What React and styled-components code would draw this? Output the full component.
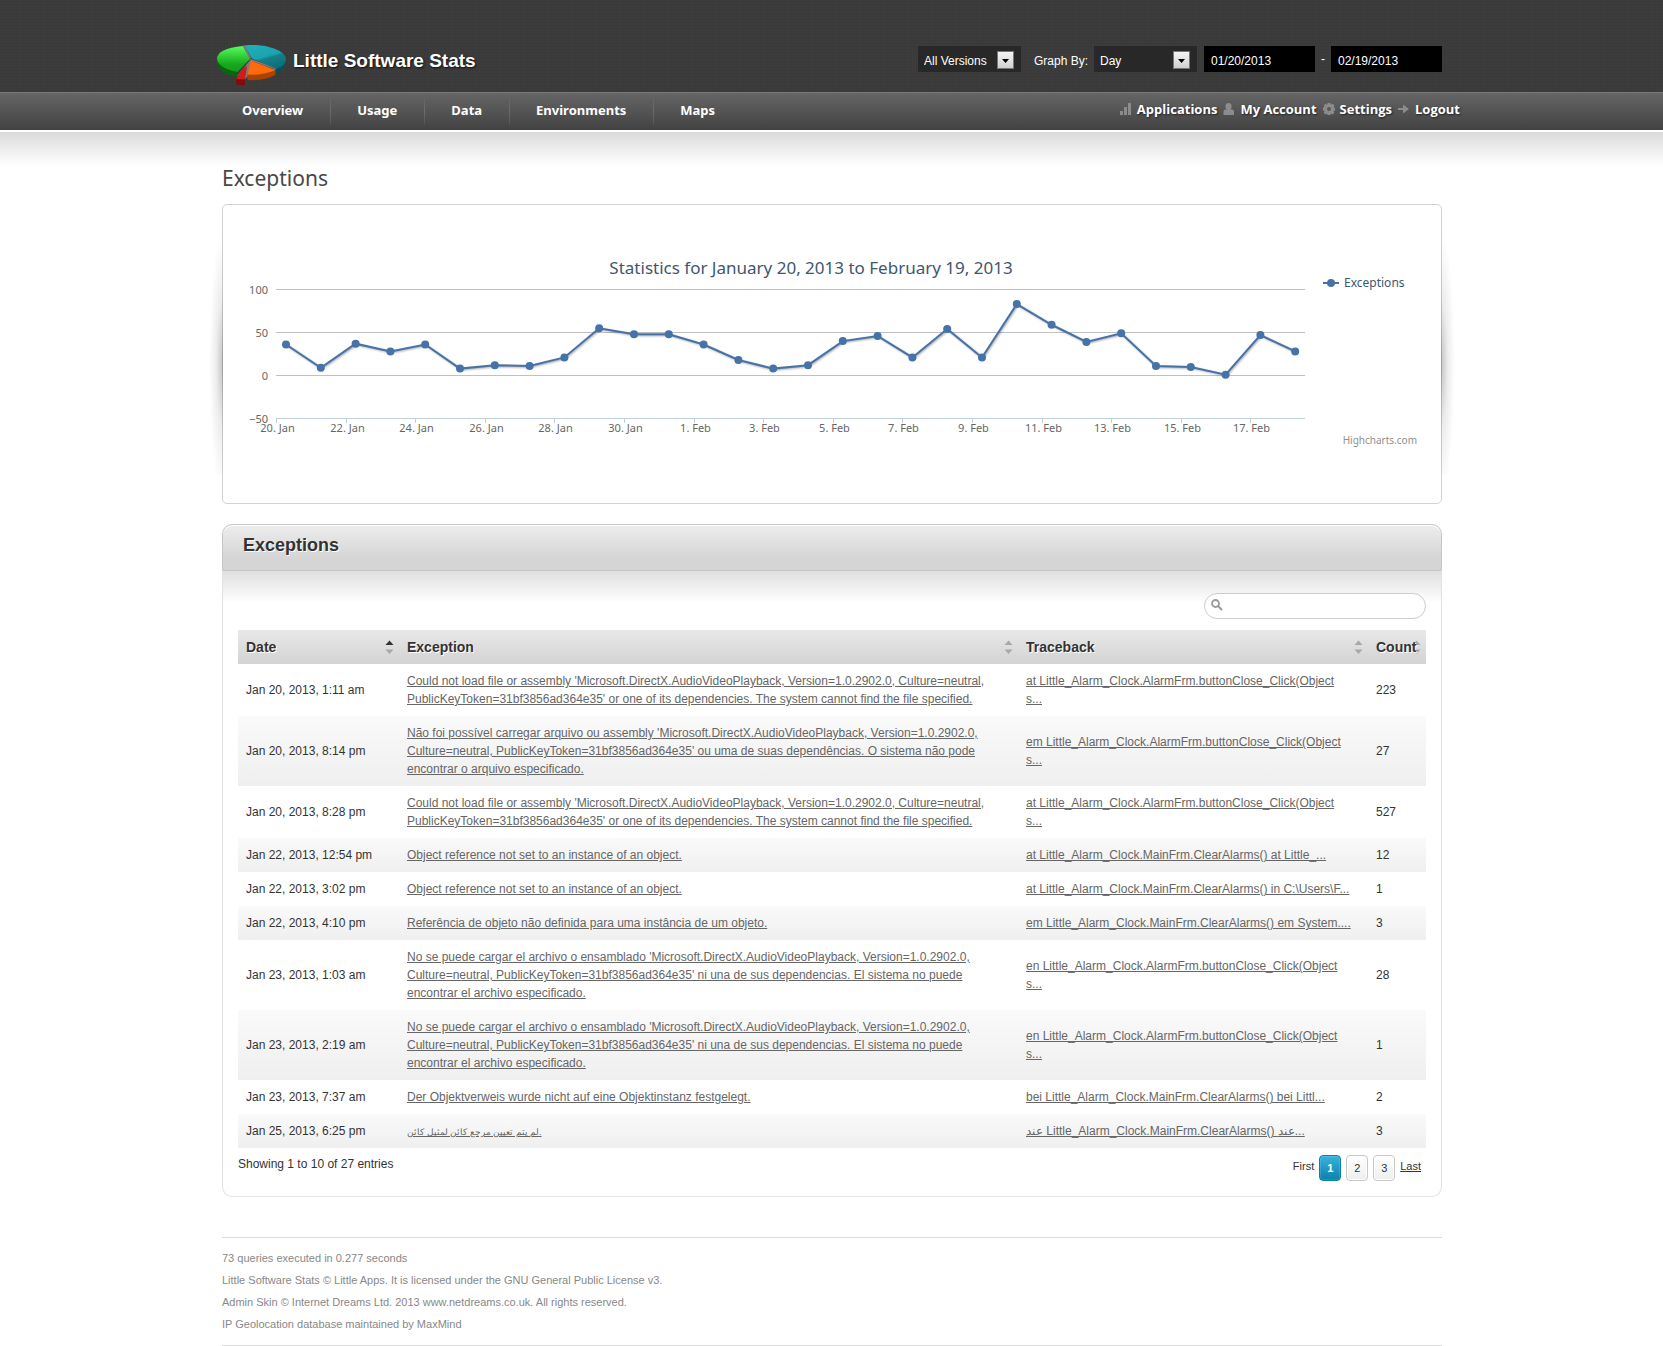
import React, { useState } from "react";
import styled, { createGlobalStyle } from "styled-components";

const SANS = '"Liberation Sans", Arial, sans-serif';
const HUMANIST = '"Noto Sans", Tahoma, sans-serif';
const OPEN = '"Open Sans", "Segoe UI", sans-serif';

const GlobalStyle = createGlobalStyle`
  *, *::before, *::after { box-sizing: border-box; }
  body { margin: 0; background: #fff; color: #333; font: 12px/18px ${SANS}; }
  button, input, select { font: inherit; color: inherit; }
`;

const Wrap = styled.div`
  max-width: 1221px;
  margin: 0 auto;
  padding-left: 1px;
`;

const TopBar = styled.header`
  background-color: #3b3b3b;
  background-image:
    repeating-linear-gradient(90deg, rgba(255, 255, 255, 0.01) 0 1px, transparent 1px 3px),
    repeating-linear-gradient(0deg, rgba(0, 0, 0, 0.03) 0 1px, transparent 1px 3px);
`;

const TopInner = styled(Wrap)`
  display: flex;
  align-items: flex-start;
  justify-content: space-between;
  height: 92px;
  padding-top: 45px;
`;

const Brand = styled.a`
  display: flex;
  align-items: flex-start;
  gap: 7px;
  margin-left: -5px;
  color: #fff;
  font-size: 19px;
  font-weight: 700;
  line-height: 32px;
  text-decoration: none;
  text-shadow: 1px 1px 2px #111;
`;

const Filters = styled.form`
  display: flex;
  color: #fff;
  line-height: 30px;
  padding-top: 1px;
`;

const FilterLabel = styled.label`
  padding: 0 6px 0 13px;
`;

const SelectBox = styled.span`
  position: relative;
  width: 103px;
  height: 26px;
`;

const Select = styled.select`
  appearance: none;
  display: block;
  width: 100%;
  height: 26px;
  padding: 4px 30px 0 6px;
  border: 0;
  border-radius: 0;
  background: #282828;
  line-height: 22px;
`;

const SelectArrow = styled.svg`
  position: absolute;
  top: 5px;
  right: 7px;
  pointer-events: none;
`;

const DateInput = styled.input`
  width: 111px;
  height: 26px;
  margin-left: ${(p) => (p.$first ? 7 : 0)}px;
  padding: 4px 7px 0;
  border: 0;
  background: #000;
  line-height: 22px;
`;

const Dash = styled.span`
  width: 16px;
  line-height: 26px;
  text-align: center;
`;

const NavBar = styled.nav`
  height: 38px;
  border-top: 1px solid #7a7a7a;
  background: linear-gradient(#656565, #424242);
`;

const NavInner = styled.div`
  display: flex;
  justify-content: space-between;
  max-width: 1257px;
  margin: 0 auto;
  padding-left: 13px;
`;

const Menu = styled.ul`
  display: flex;
  margin: 0;
  padding: 3px 0 0;
  list-style: none;
`;

const MenuItem = styled.li`
  padding: 0 27px 0 26px;
  line-height: 28px;
  & + & {
    border-left: 1px solid;
    border-image: linear-gradient(#606060, #707070, #505050) 1;
  }
`;

const MenuLink = styled.a`
  color: #fff;
  font: 700 13px/28px ${HUMANIST};
  text-decoration: none;
`;

const UserLinks = styled.div`
  display: flex;
  gap: 6px;
  padding-top: 5px;
`;

const UserLink = styled.a`
  display: flex;
  align-items: center;
  gap: 5px;
  height: 22px;
  color: #fff;
  font: 700 13px/22px ${OPEN};
  text-decoration: none;
  text-shadow: 1px 1px 2px #222;
`;

const Main = styled.main`
  border-top: 2px solid #fff;
  background: linear-gradient(#dadada, #fff) 0 0 / 100% 34px no-repeat;
`;

const PageTitle = styled.h1`
  margin: 0;
  padding: 32px 0 12px;
  color: #484848;
  font: 400 21px/28px ${HUMANIST};
`;

const ChartCard = styled.section`
  position: relative;
  padding-bottom: 54px;
  border: 1px solid #d2d2d2;
  border-radius: 5px;
  background: #fff;
  &::before, &::after {
    content: "";
    position: absolute;
    top: 6px;
    bottom: 28px;
    width: 14px;
  }
  &::before {
    right: 100%;
    background: radial-gradient(ellipse 100% 50% at 100% 58%, rgba(0, 0, 0, 0.24), rgba(0, 0, 0, 0.07) 50%, transparent);
  }
  &::after {
    left: 100%;
    background: radial-gradient(ellipse 100% 50% at 0 58%, rgba(0, 0, 0, 0.24), rgba(0, 0, 0, 0.07) 50%, transparent);
  }
`;

const ChartSvg = styled.svg`
  display: block;
  width: 100%;
  height: auto;
  font-family: "Noto Sans", "Lucida Grande", sans-serif;
`;

const Panel = styled.section`
  margin-top: 20px;
`;

const PanelHead = styled.h2`
  margin: 0;
  padding: 0 20px 4px;
  border: 1px solid #c6c6c6;
  border-radius: 10px 10px 0 0;
  background: linear-gradient(#ededed, #d5d5d5 75%);
  box-shadow: inset 0 1px #fff;
  color: #333;
  font-size: 18px;
  line-height: 41px;
  text-shadow: 1px 1px #fff;
`;

const PanelBody = styled.div`
  padding: 22px 15px 15px;
  border: 1px solid #e2e2e2;
  border-top: 0;
  border-radius: 0 0 10px 10px;
  background: linear-gradient(#dfdfdf, #fff) 0 0 / 100% 32px no-repeat;
`;

const SearchBox = styled.div`
  display: flex;
  align-items: center;
  gap: 6px;
  width: 222px;
  height: 26px;
  margin: 0 0 11px auto;
  padding: 0 12px 2px 6px;
  border: 1px solid #ccc;
  border-radius: 13px;
  background: #fff;
`;

const SearchInput = styled.input`
  flex: 1;
  min-width: 0;
  padding: 0;
  border: 0;
  outline: 0;
  background: none;
`;

const Table = styled.table`
  width: 100%;
  table-layout: fixed;
  border-collapse: collapse;
`;

const Col = styled.col`
  width: ${(p) => p.$w};
`;

const Th = styled.th`
  position: relative;
  height: 34px;
  padding: 0 8px;
  text-align: left;
`;

const HeadRow = styled.tr`
  background: linear-gradient(#e8e8e8, #d3d3d3);
`;

const SortButton = styled.button`
  position: relative;
  z-index: 1;
  padding: 0;
  border: 0;
  background: none;
  color: #333;
  font-size: 14px;
  font-weight: 700;
  line-height: 34px;
  text-shadow: 1px 1px #fff;
`;

const SortMark = styled.svg`
  position: absolute;
  top: 10px;
  right: 5px;
`;

const Row = styled.tr`
  &:nth-child(even) { background: linear-gradient(#fafafa, #efefef); }
`;

const Td = styled.td`
  padding: 8px;
  padding-right: ${(p) => (p.$wide ? 16 : 8)}px;
  vertical-align: middle;
  overflow-wrap: break-word;
`;

const CellLink = styled.a`
  color: #666;
  font-size: ${(p) => (p.lang === "ar" ? 9 : 12)}px;
  line-height: ${(p) => (p.lang === "ar" ? 14 : 18)}px;
  text-decoration: underline;
`;

const TableFoot = styled.div`
  display: flex;
  justify-content: space-between;
  padding-top: 7px;
`;

const Pager = styled.nav`
  display: flex;
  gap: 5px;
  padding-right: 5px;
  font-size: 11px;
`;

const PageWord = styled.a`
  color: #333;
  line-height: 22px;
  text-decoration: ${(p) => (p.$link ? "underline" : "none")};
`;

const PageButton = styled.button`
  width: 22px;
  height: 26px;
  padding: 0;
  border: 1px solid ${(p) => (p.$active ? "#0e7fa6" : "#c8c8c8")};
  border-radius: 4px;
  background: ${(p) => (p.$active ? "linear-gradient(#36b4de, #0b81aa)" : "linear-gradient(#fff, #eee)")};
  box-shadow: inset 0 0 0 1px ${(p) => (p.$active ? "rgba(255,255,255,.12)" : "#fff")};
  color: ${(p) => (p.$active ? "#fff" : "#333")};
  font-weight: ${(p) => (p.$active ? 700 : 400)};
`;

const Footer = styled.footer`
  margin-top: 40px;
  padding: 9px 0 10px;
  border: 1px solid #dcdcdc;
  border-width: 1px 0;
  color: #888;
  font-size: 11px;
  line-height: 22px;
`;

const FootLine = styled.p`
  margin: 0;
`;

function Logo() {
  return (
    <svg width="69" height="41" viewBox="0 0 69 41" aria-hidden="true">
      <defs>
        <linearGradient id="lgGreen" x1="0" y1="0" x2="0" y2="1">
          <stop offset="0" stopColor="#55ff5c" />
          <stop offset="0.700" stopColor="#17a81f" />
          <stop offset="1" stopColor="#149a1c" />
        </linearGradient>
        <linearGradient id="lgTeal" x1="0.200" y1="0" x2="0.700" y2="1">
          <stop offset="0" stopColor="#1fb0ba" />
          <stop offset="0.500" stopColor="#1ba3ae" />
          <stop offset="0.600" stopColor="#128089" />
          <stop offset="1" stopColor="#0e6d75" />
        </linearGradient>
      </defs>
      <path d="M34 14 L20 31 L28 34 L31 31 L35 16 L60 25 L60 23Z" fill="#85777b" />
      <path d="M59 23 L59 29 Q68 25 69 18 L69 13Z" fill="#0a4f55" />
      <path d="M35 13.500 L27 0.500 Q43 -1.500 57 3.500 Q69 8 69 14 Q69 20 59.500 24Z" fill="url(#lgTeal)" />
      <path d="M0 13 L0 19 Q2 28 20 32.500 L21 26.500Z" fill="#0a6410" />
      <path d="M33 14 L26 1 Q0 3.500 0 14 Q1 23 20.500 27Z" fill="url(#lgGreen)" />
      <path d="M30.500 29 L30.500 35 Q46 36 58.500 30 L58.500 24.500Z" fill="#a84300" />
      <path d="M34 15.500 L30.500 29.500 Q46 30.500 58.500 25Z" fill="#ff6a0a" />
      <path d="M19 33.500 L19 39.500 L28 40.500 L28 34Z" fill="#800c0c" />
      <path d="M30 21 L25 24 L19 33.800 L28 34.500Z" fill="#cc1c1c" />
      <path d="M33.500 13.500 L26.500 0.500" stroke="#8c7c80" strokeWidth="1.500" fill="none" />
    </svg>
  );
}

const userIcons = {
  bars: (
    <path d="M0 8h3v4H0z M4 4h3v8H4z M8 0h3v12H8z" />
  ),
  person: (
    <path d="M5.500 0a3 3 0 0 1 3 3v1.500a3 3 0 0 1-1 2h1.500a2 2 0 0 1 2 2V12H0.500V8.500a2 2 0 0 1 2-2H4a3 3 0 0 1-1.500-2V3a3 3 0 0 1 3-3z" />
  ),
  gear: (
    <path fillRule="evenodd" d="M4.500 0h3l.5 1.800 1.800-1 1.600 1.700-1 1.700 1.600.6v2.700l-1.700.6 1 1.700-1.700 1.600-1.600-.9-.5 1.500h-3l-.5-1.600-1.700 1L.700 9.700l1-1.600L0 7.500v-3l1.700-.5-1-1.600L2.500.700l1.600 1zM6 4a2 2 0 1 0 0 4 2 2 0 0 0 0-4z" />
  ),
  arrow: (
    <path d="M0 5h5V1.500L11 6l-6 4.500V7H0z" />
  ),
};

const pageLinks = ["Overview", "Usage", "Data", "Environments", "Maps"];
const userLinks = [
  ["bars", "Applications"],
  ["person", "My Account"],
  ["gear", "Settings"],
  ["arrow", "Logout"],
];

const counts = [36, 9, 37, 28, 36, 8, 12, 11, 21, 55, 48, 48, 36, 18, 8, 12, 40, 46, 21, 54, 21, 83, 59, 39, 49, 11, 10, 1, 47, 28];
const dayLabels = ["20. Jan", "22. Jan", "24. Jan", "26. Jan", "28. Jan", "30. Jan", "1. Feb", "3. Feb", "5. Feb", "7. Feb", "9. Feb", "11. Feb", "13. Feb", "15. Feb", "17. Feb"];

const PLOT = { left: 53, right: 1082, zero: 170.5, day: 34.8 };
const yOf = (v) => PLOT.zero - v * 0.86;

function Chart() {
  const points = counts.map((v, i) => [PLOT.left + 10 + i * PLOT.day, yOf(v)]);
  const line = points.map((p) => p.join(",")).join(" ");
  return (
    <ChartSvg viewBox="0 0 1218 244" role="img" aria-label="Exceptions per day">
      <text x="588" y="69" textAnchor="middle" fontSize="17" fill="#3e576f">
        Statistics for January 20, 2013 to February 19, 2013
      </text>
      {[100, 50, 0, -50].map((v) => (
        <g key={v}>
          <line x1={PLOT.left} x2={PLOT.right} y1={yOf(v)} y2={yOf(v)} stroke={v < 0 ? "#c0d0e0" : "#c0c0c0"} />
          <text x="45" y={yOf(v) + 4.5} textAnchor="end" fontSize="11" fill="#666">{String(v).replace("-", "−")}</text>
        </g>
      ))}
      {dayLabels.map((d, i) => {
        const x = Math.round(PLOT.left + i * 2 * PLOT.day) + 0.5;
        return (
          <g key={d}>
            <line x1={x} x2={x} y1="214" y2="218" stroke="#c0d0e0" />
            <text x={x + 1} y="227" textAnchor="middle" fontSize="11" fill="#666">{d}</text>
          </g>
        );
      })}
      <g fill="none" stroke="#000" transform="translate(1 1)">
        <polyline points={line} strokeWidth="5" strokeOpacity="0.05" />
        <polyline points={line} strokeWidth="3" strokeOpacity="0.1" />
        <polyline points={line} strokeWidth="1" strokeOpacity="0.15" />
      </g>
      <polyline points={line} fill="none" stroke="#4572a7" strokeWidth="2" />
      {points.map(([x, y]) => <circle key={x} cx={x} cy={y} r="4" fill="#4572a7" />)}
      <line x1="1100" x2="1116" y1="78" y2="78" stroke="#4572a7" strokeWidth="2" />
      <circle cx="1108" cy="78" r="4" fill="#4572a7" />
      <text x="1121" y="82" fontSize="12" fill="#3e576f">Exceptions</text>
      <text x="1194" y="239" textAnchor="end" fontSize="10" fill="#909090">Highcharts.com</text>
    </ChartSvg>
  );
}

const LOAD_EN = "Could not load file or assembly 'Microsoft.DirectX.AudioVideoPlayback, Version=1.0.2902.0, Culture=neutral, PublicKeyToken=31bf3856ad364e35' or one of its dependencies. The system cannot find the file specified.";
const LOAD_PT = "Não foi possível carregar arquivo ou assembly 'Microsoft.DirectX.AudioVideoPlayback, Version=1.0.2902.0, Culture=neutral, PublicKeyToken=31bf3856ad364e35' ou uma de suas dependências. O sistema não pode encontrar o arquivo especificado.";
const LOAD_ES = "No se puede cargar el archivo o ensamblado 'Microsoft.DirectX.AudioVideoPlayback, Version=1.0.2902.0, Culture=neutral, PublicKeyToken=31bf3856ad364e35' ni una de sus dependencias. El sistema no puede encontrar el archivo especificado.";
const NULL_EN = "Object reference not set to an instance of an object.";
const NULL_AR = "لم يتم تعيين مرجع كائن لمثيل كائن.";

const rows = [
  ["Jan 20, 2013, 1:11 am", LOAD_EN, "at Little_Alarm_Clock.AlarmFrm.buttonClose_Click(Object s...", 223],
  ["Jan 20, 2013, 8:14 pm", LOAD_PT, "em Little_Alarm_Clock.AlarmFrm.buttonClose_Click(Object s...", 27],
  ["Jan 20, 2013, 8:28 pm", LOAD_EN, "at Little_Alarm_Clock.AlarmFrm.buttonClose_Click(Object s...", 527],
  ["Jan 22, 2013, 12:54 pm", NULL_EN, "at Little_Alarm_Clock.MainFrm.ClearAlarms() at Little_...", 12],
  ["Jan 22, 2013, 3:02 pm", NULL_EN, "at Little_Alarm_Clock.MainFrm.ClearAlarms() in C:\\Users\\F...", 1],
  ["Jan 22, 2013, 4:10 pm", "Referência de objeto não definida para uma instância de um objeto.", "em Little_Alarm_Clock.MainFrm.ClearAlarms() em System....", 3],
  ["Jan 23, 2013, 1:03 am", LOAD_ES, "en Little_Alarm_Clock.AlarmFrm.buttonClose_Click(Object s...", 28],
  ["Jan 23, 2013, 2:19 am", LOAD_ES, "en Little_Alarm_Clock.AlarmFrm.buttonClose_Click(Object s...", 1],
  ["Jan 23, 2013, 7:37 am", "Der Objektverweis wurde nicht auf eine Objektinstanz festgelegt.", "bei Little_Alarm_Clock.MainFrm.ClearAlarms() bei Littl...", 2],
  ["Jan 25, 2013, 6:25 pm", NULL_AR, "عند Little_Alarm_Clock.MainFrm.ClearAlarms() عند...", 3],
];

const columns = ["Date", "Exception", "Traceback", "Count"];

function DropDown({ id, label, options }) {
  return (
    <SelectBox>
      <Select id={id} aria-label={label}>
        {options.map((o) => <option key={o}>{o}</option>)}
      </Select>
      <SelectArrow width="17" height="18" aria-hidden="true">
        <defs>
          <linearGradient id={id + "Fill"} x1="0" y1="0" x2="0" y2="1">
            <stop offset="0" stopColor="#f6f6f6" />
            <stop offset="1" stopColor="#cfcfcf" />
          </linearGradient>
        </defs>
        <rect x="0.500" y="0.500" width="16" height="17" fill={`url(#${id}Fill)`} stroke="#777" />
        <path d="M5 8h7l-3.500 4z" fill="#000" />
      </SelectArrow>
    </SelectBox>
  );
}

export default function App() {
  const [page, setPage] = useState(1);
  return (
    <>
      <GlobalStyle />
      <TopBar>
        <TopInner>
          <Brand href="#">
            <Logo />
            Little Software Stats
          </Brand>
          <Filters>
            <DropDown id="version" label="Version" options={["All Versions"]} />
            <FilterLabel htmlFor="graphBy">Graph By:</FilterLabel>
            <DropDown id="graphBy" options={["Day", "Week", "Month"]} />
            <DateInput $first aria-label="Start date" defaultValue="01/20/2013" />
            <Dash>-</Dash>
            <DateInput aria-label="End date" defaultValue="02/19/2013" />
          </Filters>
        </TopInner>
      </TopBar>
      <NavBar>
        <NavInner>
          <Menu>
            {pageLinks.map((name) => (
              <MenuItem key={name}><MenuLink href="#">{name}</MenuLink></MenuItem>
            ))}
          </Menu>
          <UserLinks>
            {userLinks.map(([icon, name]) => (
              <UserLink key={name} href="#">
                <svg width="12" height="12" viewBox="0 0 12 12" fill="#8c8c8c" aria-hidden="true">{userIcons[icon]}</svg>
                {name}
              </UserLink>
            ))}
          </UserLinks>
        </NavInner>
      </NavBar>
      <Main>
        <Wrap>
          <PageTitle>Exceptions</PageTitle>
          <ChartCard><Chart /></ChartCard>
          <Panel>
            <PanelHead>Exceptions</PanelHead>
            <PanelBody>
              <SearchBox>
                <svg width="12" height="12" viewBox="0 0 12 12" fill="none" stroke="#999" aria-hidden="true">
                  <circle cx="4.500" cy="4.500" r="3.500" strokeWidth="1.800" />
                  <path d="M7 7l4 4" strokeWidth="2" />
                </svg>
                <SearchInput type="search" aria-label="Search exceptions" />
              </SearchBox>
              <Table>
                <colgroup>
                  <Col $w="161px" />
                  <Col />
                  <Col $w="350px" />
                  <Col $w="58px" />
                </colgroup>
                <thead>
                  <HeadRow>
                    {columns.map((name, i) => (
                      <Th key={name} scope="col">
                        <SortMark width="9" height="14" aria-hidden="true">
                          <path d="M0.500 5h8l-4-4.500z" fill={i === 0 ? "#333" : "#a8a8a8"} />
                          <path d="M0.500 9.500h8l-4 4.500z" fill="#a8a8a8" />
                        </SortMark>
                        <SortButton type="button">{name}</SortButton>
                      </Th>
                    ))}
                  </HeadRow>
                </thead>
                <tbody>
                  {rows.map(([date, message, trace, count]) => (
                    <Row key={date}>
                      <Td>{date}</Td>
                      <Td><CellLink href="#" lang={message === NULL_AR ? "ar" : undefined}>{message}</CellLink></Td>
                      <Td $wide><CellLink href="#">{trace}</CellLink></Td>
                      <Td>{count}</Td>
                    </Row>
                  ))}
                </tbody>
              </Table>
              <TableFoot>
                <span>Showing 1 to 10 of 27 entries</span>
                <Pager aria-label="Pages">
                  <PageWord>First</PageWord>
                  {[1, 2, 3].map((n) => (
                    <PageButton key={n} type="button" $active={n === page} onClick={() => setPage(n)}>{n}</PageButton>
                  ))}
                  <PageWord $link href="#">Last</PageWord>
                </Pager>
              </TableFoot>
            </PanelBody>
          </Panel>
          <Footer>
            <FootLine>73 queries executed in 0.277 seconds</FootLine>
            <FootLine>Little Software Stats © Little Apps. It is licensed under the GNU General Public License v3.</FootLine>
            <FootLine>Admin Skin © Internet Dreams Ltd. 2013 www.netdreams.co.uk. All rights reserved.</FootLine>
            <FootLine>IP Geolocation database maintained by MaxMind</FootLine>
          </Footer>
        </Wrap>
      </Main>
    </>
  );
}
